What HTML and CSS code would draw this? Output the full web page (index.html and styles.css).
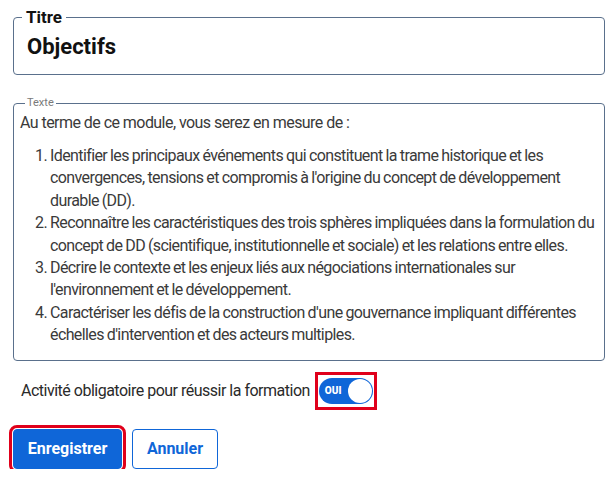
FILE: index.html
```html
<!DOCTYPE html>
<html lang="fr">
<head>
<meta charset="utf-8">
<title>Objectifs</title>
<link rel="stylesheet" href="styles.css">
</head>
<body>
<div class="page">
  <fieldset class="box box-title">
    <legend class="legend-title">Titre</legend>
    <div class="title-value">Objectifs</div>
  </fieldset>

  <fieldset class="box box-text">
    <legend class="legend-text">Texte</legend>
    <p class="intro">Au terme de ce module, vous serez en mesure de :</p>
    <ol class="goals">
      <li>Identifier les principaux événements qui constituent la trame historique et les convergences, tensions et compromis à l'origine du concept de développement durable (DD).</li>
      <li>Reconnaître les caractéristiques des trois sphères impliquées dans la formulation du concept de DD (scientifique, institutionnelle et sociale) et les relations entre elles.</li>
      <li>Décrire le contexte et les enjeux liés aux négociations internationales sur l'environnement et le développement.</li>
      <li>Caractériser les défis de la construction d'une gouvernance impliquant différentes échelles d'intervention et des acteurs multiples.</li>
    </ol>
  </fieldset>

  <div class="toggle-row">
    <span class="toggle-label">Activité obligatoire pour réussir la formation</span>
    <span class="highlight-wrap">
      <span class="switch">
        <span class="switch-text">OUI</span>
        <span class="knob"></span>
      </span>
    </span>
  </div>

  <div class="actions">
    <button class="btn btn-primary highlight">Enregistrer</button>
    <button class="btn btn-secondary">Annuler</button>
  </div>
</div>
</body>
</html>
```

FILE: styles.css
```css
* { box-sizing: border-box; }

body {
  margin: 0;
  background: #ffffff;
  color: #222222;
  font-family: "Roboto", "Lato", sans-serif;
}

.page {
  padding: 7px 10px 0 13px;
}

.box {
  margin: 0;
  border: 1px solid #5a708c;
  border-radius: 4px;
  min-width: 0;
}

.box-title {
  padding: 6px 13px 13px 13px;
}

.legend-title {
  padding: 0 4px;
  margin-left: -5px;
  font-weight: 700;
  font-size: 17px;
  line-height: 20px;
  color: #111111;
}

.title-value {
  font-weight: 700;
  font-size: 22px;
  line-height: 28px;
  color: #111111;
}

.box-text {
  margin-top: 21px;
  padding: 2px 4px 13px 6px;
}

.legend-text {
  margin-left: 5px;
  padding: 0 2px;
  font-size: 11px;
  line-height: 14px;
  color: #7a7a7a;
  font-weight: 400;
}

.intro {
  margin: 0;
  font-size: 16px;
  line-height: 22px;
  color: #3a3a3a;
  letter-spacing: -0.55px;
}

.goals {
  margin: 11px 0 0 0;
  padding-left: 30px;
  font-size: 16px;
  line-height: 22.4px;
  color: #3a3a3a;
  letter-spacing: -0.6px;
  word-spacing: -0.5px;
}

.toggle-row {
  display: flex;
  align-items: center;
  gap: 5px;
  margin-top: 11px;
  padding-left: 8px;
}

.toggle-label {
  font-size: 16px;
  font-weight: 400;
  color: #2a2a2a;
  letter-spacing: -0.5px;
}

.highlight-wrap {
  display: inline-flex;
  border: 3px solid #e0001b;
  padding: 3px 1px;
}

.switch {
  position: relative;
  display: inline-flex;
  align-items: center;
  width: 54px;
  height: 26px;
  border-radius: 13px;
  background: #0f66d8;
  padding-left: 6px;
}

.switch-text {
  color: #ffffff;
  font-size: 10px;
  font-weight: 900;
  letter-spacing: 0.1px;
}

.knob {
  position: absolute;
  right: 1px;
  top: 1px;
  width: 24px;
  height: 24px;
  border-radius: 50%;
  background: #ffffff;
}

.actions {
  display: flex;
  gap: 10px;
  margin-top: 19px;
}

.btn {
  height: 40px;
  border-radius: 4px;
  font-family: inherit;
  font-size: 16px;
  font-weight: 700;
  cursor: pointer;
}

.btn-primary {
  width: 109px;
  background: #0f66d8;
  color: #ffffff;
  border: 1px solid #0f66d8;
}

.btn-secondary {
  width: 86px;
  background: #ffffff;
  color: #0f66d8;
  border: 1px solid #0f66d8;
}

.highlight {
  outline: 3px solid #e0001b;
  outline-offset: 1px;
}
```
